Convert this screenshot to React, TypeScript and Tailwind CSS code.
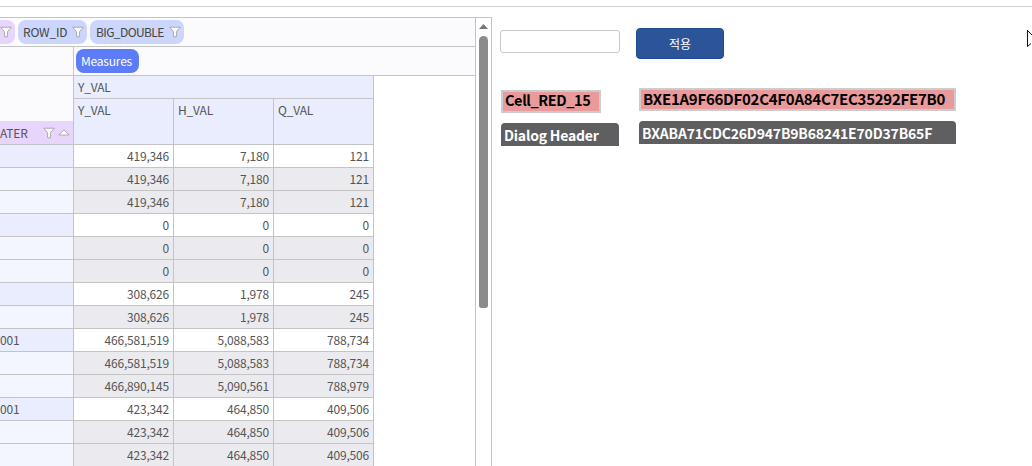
const FONT = { fontFamily: '"Noto Sans CJK KR", "Open Sans", sans-serif' };

type Row = { label?: string; y: string; h: string; q: string; first?: boolean };

const rows: Row[] = [
  { y: "419,346", h: "7,180", q: "121", first: true },
  { y: "419,346", h: "7,180", q: "121" },
  { y: "419,346", h: "7,180", q: "121" },
  { y: "0", h: "0", q: "0", first: true },
  { y: "0", h: "0", q: "0" },
  { y: "0", h: "0", q: "0" },
  { y: "308,626", h: "1,978", q: "245", first: true },
  { y: "308,626", h: "1,978", q: "245" },
  { label: "001", y: "466,581,519", h: "5,088,583", q: "788,734", first: true },
  { y: "466,581,519", h: "5,088,583", q: "788,734" },
  { y: "466,890,145", h: "5,090,561", q: "788,979" },
  { label: "001", y: "423,342", h: "464,850", q: "409,506", first: true },
  { y: "423,342", h: "464,850", q: "409,506" },
  { y: "423,342", h: "464,850", q: "409,506" },
];

function Funnel() {
  return (
    <svg width="12" height="12" viewBox="0 0 12 12" className="shrink-0">
      <path d="M0.7 1.2H11.3L7.4 5.8V10.8H4.6V5.8Z" fill="#fff" stroke="#a9a9a9" strokeWidth="1" />
    </svg>
  );
}

function SortUp() {
  return (
    <svg width="12" height="7" viewBox="0 0 12 7" className="shrink-0">
      <path d="M6 0.8L11.2 6H0.8Z" fill="#fff" stroke="#a9a9a9" strokeWidth="1" />
    </svg>
  );
}

function Pivot() {
  return (
    <div className="w-[476px] shrink-0 overflow-hidden border-r border-[#c4c4c4] text-xs tracking-[-0.2px] text-[#555]">
      <div className="flex h-[29px] items-start gap-[3px] border-b border-[#c4c4c4] bg-[#fbfbfd] pt-[2px]">
        <div className="flex h-6 w-[15px] shrink-0 items-center justify-end rounded-r-lg bg-[#e8d5fb] pr-[3px]">
          <Funnel />
        </div>
        <div className="flex h-6 w-[69px] shrink-0 items-center justify-between rounded-lg bg-[#ccd5fb] pl-[5px] pr-[3px] text-[#444]">
          <span>ROW_ID</span>
          <Funnel />
        </div>
        <div className="flex h-6 w-[94px] shrink-0 items-center justify-between rounded-lg bg-[#ccd5fb] pl-[6px] pr-[3px] tracking-[-0.6px] text-[#444]">
          <span>BIG_DOUBLE</span>
          <Funnel />
        </div>
      </div>
      <div className="flex h-[29px] border-b border-[#c4c4c4] bg-[#fbfbfd]">
        <div className="w-[74px] border-r border-[#c4c4c4]" />
        <div className="pl-[2px] pt-[2px]">
          <div className="flex h-6 w-[63px] items-center justify-center rounded-lg bg-[#5c7cf8] pr-[2px] text-white">
            Measures
          </div>
        </div>
      </div>
      <div className="flex">
        <div className="flex h-[69px] w-[74px] flex-col justify-end border-r border-b border-[#c4c4c4] bg-[#fbfbfd]">
          <div className="flex h-[23px] items-center bg-[#e8d5fb]">
            <span className="flex-1">ATER</span>
            <Funnel />
            <span className="ml-[3px] mr-[3px] flex">
              <SortUp />
            </span>
          </div>
        </div>
        <div className="w-[300px]">
          <div className="flex h-[23px] items-center border-r border-b border-[#c4c4c4] bg-[#e9edfd] pl-[4px]">
            Y_VAL
          </div>
          <div className="flex h-[46px]">
            {["Y_VAL", "H_VAL", "Q_VAL"].map((name) => (
              <div key={name} className="w-[100px] border-r border-b border-[#c4c4c4] bg-[#e9edfd] pl-[4px] pt-[3px]">
                {name}
              </div>
            ))}
          </div>
        </div>
      </div>
      {rows.map((row, i) => (
        <div key={i} className="flex h-[23px]">
          <div
            className={
              row.first
                ? "flex w-[74px] items-center border-r border-b border-[#c4c4c4] bg-[#e9edfd]"
                : "flex w-[74px] items-center border-r border-b border-[#c4c4c4] bg-[#f3f6fe]"
            }
          >
            {row.label}
          </div>
          {[row.y, row.h, row.q].map((value, j) => (
            <div
              key={j}
              className={
                row.first
                  ? "flex w-[100px] items-center justify-end border-r border-b border-[#c4c4c4] bg-white pr-[4px]"
                  : "flex w-[100px] items-center justify-end border-r border-b border-[#c4c4c4] bg-[#ebebef] pr-[4px]"
              }
            >
              {value}
            </div>
          ))}
        </div>
      ))}
    </div>
  );
}

function Scrollbar() {
  return (
    <div className="flex w-4 shrink-0 flex-col items-center border-r border-[#c4c4c4] pt-[6px]">
      <svg width="9" height="5" viewBox="0 0 9 5">
        <path d="M4.5 0L9 5H0Z" fill="#777" />
      </svg>
      <div className="mt-[7px] h-[272px] w-[9px] rounded-t-[5px] rounded-b-[3px] bg-[#8b8b8b]" />
    </div>
  );
}

function SidePanel() {
  return (
    <div className="flex-1 pl-2 pt-[21px]">
      <div className="flex items-start gap-4">
        <input className="mt-[2px] h-[23px] w-[120px] rounded-[3px] border border-[#c8c8c8] bg-white" />
        <button className="h-[31px] w-[88px] rounded-[4px] border border-[#1f4a92] bg-[#2c5599] pt-[1px] text-xs text-white">
          적용
        </button>
      </div>
      <div className="mt-[29px] flex items-start text-sm font-bold leading-none">
        <div className="ml-px w-[118px] pt-[2px]">
          <div className="flex h-[23px] w-[100px] items-center border-2 border-[#cccccc] bg-[#ea9a9a] pb-[2px] pl-[2px] text-[14.5px] tracking-[-0.4px] text-black">
            Cell_RED_15
          </div>
          <div className="mt-[10px] flex h-[23px] items-center rounded-t-[4px] bg-[#5f5e60] pl-[3px] tracking-[-0.2px] text-white">
            Dialog Header
          </div>
        </div>
        <div className="ml-5 w-[317px]">
          <div className="flex h-[23px] items-center border-2 border-[#cccccc] bg-[#ea9a9a] pb-[2px] pl-[2px] text-[15px] tracking-[-0.27px] text-black">
            BXE1A9F66DF02C4F0A84C7EC35292FE7B0
          </div>
          <div className="mt-[10px] flex h-[23px] items-center rounded-t-[4px] bg-[#5f5e60] pl-[3px] tracking-[-0.18px] text-white">
            BXABA71CDC26D947B9B68241E70D37B65F
          </div>
        </div>
      </div>
    </div>
  );
}

export default function App() {
  return (
    <div className="relative h-[466px] w-[1032px] overflow-hidden bg-white" style={FONT}>
      <div className="h-[7px] border-b border-[#d0d0d0]" />
      <div className="flex h-[459px]">
        <div className="pt-[10px]">
          <div className="flex h-[449px] overflow-hidden border-t border-[#c4c4c4]">
            <Pivot />
            <Scrollbar />
          </div>
        </div>
        <SidePanel />
      </div>
      <svg width="5" height="17" viewBox="0 0 5 17" className="absolute left-[1027px] top-[30px]">
        <path d="M0.5 0V16.5L4 13.5M0.5 0.5L5 5" fill="#fff" stroke="#111" strokeWidth="1" />
      </svg>
    </div>
  );
}
